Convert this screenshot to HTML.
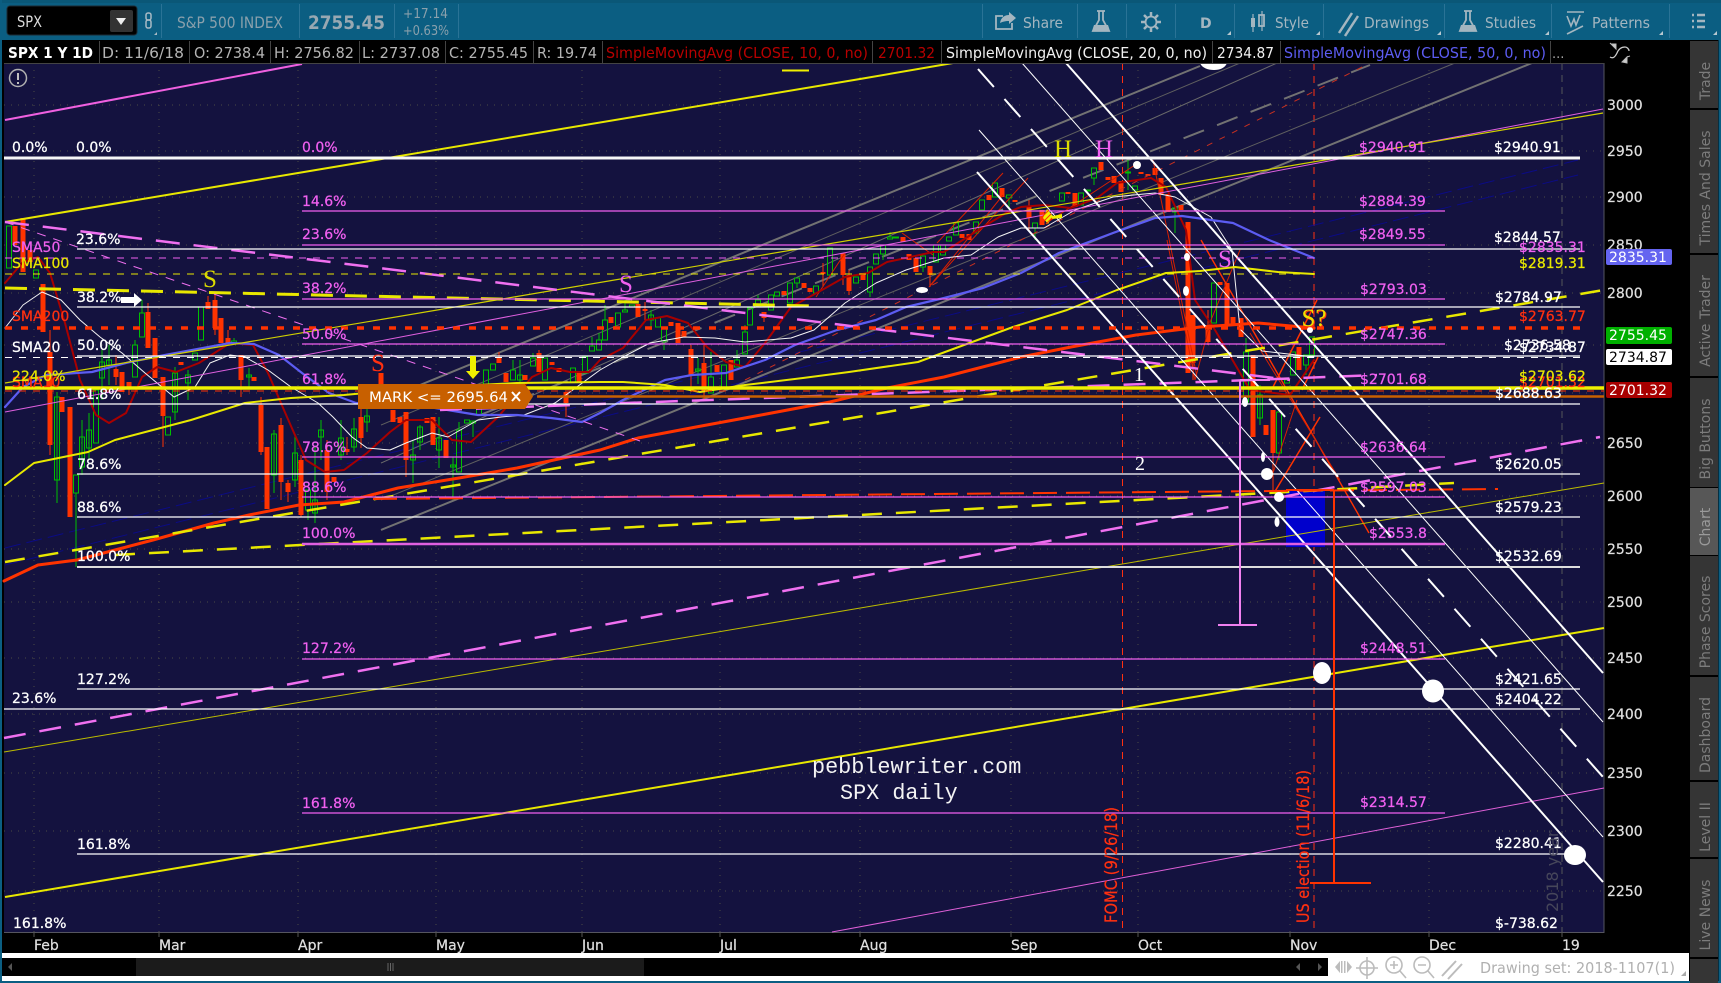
<!DOCTYPE html>
<html><head><meta charset="utf-8"><title>SPX</title>
<style>
html,body{margin:0;padding:0;background:#000;width:1721px;height:983px;overflow:hidden}
svg{display:block}
text{font-family:"DejaVu Sans","Liberation Sans",sans-serif;font-size:14px}
.w{fill:#fff;stroke:#fff;stroke-width:.25}.m{fill:#f060f0;stroke:#f060f0;stroke-width:.25}.y{fill:#e8e800;stroke:#e8e800;stroke-width:.25}.r{fill:#ff3010;stroke:#ff3010;stroke-width:.25}
.tb{fill:#a4b6c0;font-size:15px}
.ax{fill:#e0e0e0;stroke:#e0e0e0;stroke-width:.2}
.tab{fill:#7c7c7c;font-size:14px;text-anchor:middle}
.ser{font-family:"Liberation Serif",serif;font-size:25px;text-anchor:middle}
.mono{font-family:"Liberation Mono",monospace;fill:#f4f4f4;font-size:21.8px}
.ib{fill:#b4b4b4;font-size:15px}
</style></head><body>
<svg width="1721" height="983" viewBox="0 0 1721 983" xmlns="http://www.w3.org/2000/svg">
<!-- frame -->
<rect width="1721" height="983" fill="#000"/>
<rect width="1721" height="40" fill="#0b5e82"/>
<rect width="1721" height="3" fill="#0a5777"/>
<rect x="0" y="0" width="2" height="983" fill="#0b5e82"/>
<rect x="1718.500" y="40" width="2.500" height="943" fill="#0b5e82"/>
<rect x="0" y="981" width="1721" height="2" fill="#0b5e82"/>
<!-- plot -->
<rect x="4" y="63" width="1600" height="869" fill="#14123f"/>
<path d="M1604 63V932.500H4" fill="none" stroke="#55555f"/>
<path d="M4 105H1604M4 151H1604M4 197H1604M4 245H1604M4 293H1604M4 345H1604M4 393H1604M4 443H1604M4 496H1604M4 549H1604M4 602H1604M4 658H1604M4 714H1604M4 773H1604M4 831H1604M4 891H1604M34 63V932M159 63V932M298 63V932M436 63V932M582 63V932M720 63V932M860 63V932M1011 63V932M1138 63V932M1290 63V932M1429 63V932" stroke="#4a4a44" stroke-dasharray="1 6" fill="none"/>
<path d="M1562 63V932" stroke="#55555a" stroke-dasharray="7 5" fill="none"/>
<path d="M1122.500 63V932M1314 63V932" stroke="#ff3010" stroke-dasharray="7 6" fill="none"/>

<!-- dark blue dashed -->
<g fill="none" stroke="#0b0b85" stroke-dasharray="16 6"><path d="M5 548L1578 160"/><path d="M5 565L1578 175"/></g>
<!-- grey diagonals -->
<g fill="none" stroke="#727272">
<path d="M420 385L1200 66" stroke-width="2"/>
<path d="M381 425L1240 63" stroke="#5f5f5f"/>
<path d="M381 463L1277 63" stroke="#6a6a6a"/>
<path d="M381 500L1455 63" stroke="#5f5f5f"/>
<path d="M381 530L1532 63" stroke-width="2"/>
<path d="M480 415L1370 65" stroke-width="2" stroke-dasharray="22 14"/>
</g>

<!-- candles: green -->
<path fill="none" stroke="#00c000" d="M6.500 226h5v42h-5zM33.500 270h5v8h-5zM54.500 397h5v83h-5zM73.500 475h5v18h-5zM79.500 437h5v30h-5zM86.500 430h5v18h-5zM93.500 390h5v53h-5zM99.500 362h5v16h-5zM106.500 360h5v5h-5zM132.500 345h5v32h-5zM139.500 313h5v24h-5zM165.500 417h5v18h-5zM172.500 373h5v39h-5zM185.500 375h5v8h-5zM192.500 353h5v7h-5zM198.500 307h5v33h-5zM231.500 341h5v2h-5zM246.500 375h5v2h-5zM271.500 434h5v41h-5zM292.500 453h5v27h-5zM305.500 490h5v20h-5zM312.500 500h5v13h-5zM318.500 430h5v7h-5zM338.500 438h5v17h-5zM351.500 429h5v18h-5zM364.500 416h5v6h-5zM410.500 455h5v5h-5zM417.500 427h5v15h-5zM436.500 438h5v12h-5zM450.500 465h5v2h-5zM456.500 430h5v42h-5zM464.500 420h5v3h-5zM470.500 421h5v2h-5zM476.500 407h5v8h-5zM483.500 370h5v23h-5zM490.500 364h5v6h-5zM510.500 370h5v10h-5zM517.500 375h5v5h-5zM530.500 358h5v8h-5zM542.500 358h5v22h-5zM570.500 368h5v14h-5zM582.500 357h5v16h-5zM589.500 346h5v5h-5zM596.500 340h5v10h-5zM602.500 320h5v20h-5zM615.500 313h5v14h-5zM622.500 310h5v2h-5zM629.500 305h5v2h-5zM648.500 315h5v5h-5zM655.500 318h5v9h-5zM661.500 329h5v12h-5zM695.500 369h5v2h-5zM708.500 377h5v16h-5zM721.500 365h5v23h-5zM734.500 360h5v7h-5zM742.500 332h5v22h-5zM747.500 308h5v17h-5zM755.500 300h5v7h-5zM768.500 295h5v15h-5zM774.500 292h5v4h-5zM787.500 283h5v20h-5zM794.500 278h5v5h-5zM813.500 286h5v7h-5zM827.500 248h5v27h-5zM853.500 277h5v6h-5zM867.500 267h5v25h-5zM873.500 254h5v10h-5zM880.500 245h5v9h-5zM887.500 237h5v2h-5zM893.500 237h5v1h-5zM920.500 256h5v11h-5zM933.500 245h5v17h-5zM940.500 245h5v10h-5zM946.500 237h5v4h-5zM953.500 223h5v12h-5zM973.500 222h5v11h-5zM979.500 200h5v10h-5zM992.500 183h5v14h-5zM1006.500 195h5v3h-5zM1032.500 223h5v5h-5zM1059.500 193h5v8h-5zM1078.500 193h5v12h-5zM1085.500 190h5v1h-5zM1091.500 168h5v10h-5zM1125.500 172h5v1h-5zM1132.500 186h5v4h-5zM1172.500 208h5v4h-5zM1211.500 283h5v40h-5zM1243.500 352h5v50h-5zM1257.500 395h5v23h-5zM1276.500 412h5v41h-5zM1284.500 380h5v3h-5zM1290.500 352h5v23h-5zM1303.500 355h5v10h-5zM1309.500 337h5v18h-5z"/>
<path fill="none" stroke="#00c000" d="M57 392V503M76 493V567M82 420V475M89 413V460M102 350V400M109 345V385M135 340V345M142 300V313M175 367V420M188 370V400M234 338V341M249 368V387M274 430V493M295 435V487M308 510V520M315 447V523M321 420V460M341 420V460M354 418V452M367 407V432M413 440V483M420 425V450M439 417V468M453 457V500M459 422V430M473 423V437M513 360V370M520 360V385M533 353V358M592 337V346M599 333V340M605 305V320M625 300V310M651 310V330M664 341V350M698 358V384M711 352V377M737 350V360M745 325V332M758 295V300M797 283V288M870 292V297M883 254V260M890 232V237M923 267V272M1009 198V210M1035 228V240M1094 178V185M1128 160V190M1175 208V233M1246 338V352M1260 385V425M1279 453V460M1306 365V375"/>
<!-- candles: red bodies -->
<path fill="none" stroke="#ff3300" stroke-width="5" d="M15 226V245M23 218V272M30 250V262M43 284V332M50 352V445M62 397V412M70 407V517M116 369V377M122 372V392M129 382V388M148 312V348M155 338V378M163 377V416M181 362V365M208 302V309M215 300V328M221 318V343M228 338V343M241 355V380M254 377V381M261 405V452M267 447V509M281 425V482M288 483V492M301 460V515M327 450V492M334 477V482M347 449V452M361 417V438M381 373V385M393 410V422M400 417V423M406 412V460M427 418V423M433 417V445M446 440V458M499 357V363M506 373V382M525 375V380M539 353V372M552 362V365M559 368V372M566 392V403M579 373V382M611 317V323M638 304V317M645 309V311M671 322V326M678 323V343M684 331V337M691 349V375M704 363V392M717 365V372M731 360V380M764 312V318M784 291V295M804 283V288M810 288V292M823 272V274M843 253V275M849 275V291M863 273V280M903 237V242M909 254V260M916 258V272M930 266V275M962 234V238M969 234V240M989 195V200M1002 188V197M1015 200V202M1029 207V218M1042 210V225M1068 192V194M1075 193V207M1101 162V170M1108 177V180M1114 176V183M1121 181V192M1141 172V174M1148 174V176M1155 168V175M1161 178V195M1168 194V212M1181 205V210M1188 222V373M1193 315V363M1208 330V342M1220 282V285M1227 283V325M1233 317V325M1241 318V337M1253 355V437M1266 425V435M1273 410V453M1299 347V370"/>
<path fill="none" stroke="#ff3300" d="M50 330V455M116 355V385M129 388V395M148 303V312M163 416V447M208 296V302M215 293V335M228 330V338M241 380V397M261 397V455M281 418V500M288 480V502M301 455V517M327 440V500M347 437V455M361 407V448M381 373V390M406 460V477M499 352V357M539 350V353M566 403V417M645 302V320M691 345V392M704 345V400M764 318V322M823 263V287M843 275V285M849 270V295M930 275V287M1029 200V230M1193 363V380M1208 310V345M1273 453V490"/>

<!-- thin red zigzags and dashed -->
<g fill="none" stroke="#d62000">
<path d="M745 380L1370 63" stroke="#c83020" stroke-dasharray="6 8"/>
<path d="M816 297L845 253M902 233L933 255M929 287L1028 178M937 243L1003 173M929 287L1003 195M1048 222L1135 165M1153 160L1197 377M1167 240L1195 380M1195 380L1211 320L1240 250" />
<path d="M1201 240L1369 533" stroke="#ff3300" stroke-width="1.400"/>
<path d="M1250 333L1340 480M1273 473L1297 400"/>
<path d="M1274 493L1320 417M1273 387L1317 300M1302 390L1318 357" stroke="#ff3300" stroke-width="1.500"/>
</g>

<!-- SMA curves -->
<g fill="none" stroke-linejoin="round" stroke-linecap="round">
<polyline stroke="#a80000" stroke-width="2" points="5,283 23,262 38,257 50,273 65,323 80,380 96,415 109,423 126,413 142,377 157,367 176,372 199,363 230,343 253,345 268,373 287,417 306,460 325,472 344,470 367,453 390,432 406,420 432,420 452,440 471,442 498,417 532,377 551,368 570,372 589,372 600,360 623,348 646,320 667,316 688,323 707,347 726,362 745,367 765,343 791,307 822,290 845,277 868,273 887,262 906,258 933,252 944,252 983,227 1006,213 1021,207 1044,205 1071,208 1097,198 1117,183 1151,178 1166,187 1186,230 1195,300 1215,330 1250,390 1290,395 1314,360"/>
<polyline stroke="#f4f4f4" stroke-width="1" points="5,328 23,305 42,292 61,300 80,320 100,337 122,353 145,373 174,397 195,387 210,363 230,355 245,357 268,370 291,387 318,403 333,417 352,437 367,448 390,450 406,443 432,433 448,437 478,420 501,417 524,415 555,403 600,370 623,357 650,343 684,337 715,338 745,342 791,338 814,330 845,303 876,283 906,270 944,258 971,255 998,237 1021,228 1044,228 1075,210 1113,197 1155,193 1175,197 1211,217 1232,250 1240,329 1262,351 1314,357"/>
<polyline stroke="#5c5cf2" stroke-width="2.200" points="5,407 23,387 46,375 92,372 130,362 165,355 203,348 230,343 254,344 279,355 302,373 329,393 356,403 429,407 478,415 517,415 551,418 582,422 600,413 623,400 665,380 692,375 726,373 765,360 795,345 837,330 876,320 906,307 944,298 983,288 1021,273 1059,253 1113,233 1155,218 1182,216 1233,223 1269,240 1314,258"/>
<polyline stroke="#e8e800" stroke-width="2" points="5,485 34,463 88,452 115,440 153,430 191,420 245,403 291,398 344,395 421,388 517,383 600,382 623,382 665,385 700,392 745,385 803,378 849,372 918,362 964,345 1013,327 1067,310 1117,290 1166,273 1200,271 1235,267 1278,272 1314,274"/>
<polyline stroke="#ff3300" stroke-width="3" points="4,581 38,565 77,560 115,550 153,540 214,523 249,515 299,505 344,502 398,488 459,478 517,468 600,450 638,438 696,427 761,415 830,402 887,388 944,377 1021,357 1071,347 1136,335 1200,327 1230,325 1258,323 1314,328"/>
</g>

<!-- blue box -->
<rect x="1286" y="490" width="39" height="57" fill="#0000cc"/>

<!-- channel and trend lines -->
<g fill="none">
<path d="M5 120L302 64" stroke="#f060e0" stroke-width="2"/>
<path d="M5 222L860 79L953 63" stroke="#e8e800" stroke-width="2"/>
<path d="M5 897L1604 628" stroke="#e8e800" stroke-width="2"/>
<path d="M4 752L1604 483" stroke="#bcbc00"/>
<path d="M832 932L1604 788" stroke="#e060d8"/>
<path d="M5 412L1603 109" stroke="#e060e0"/>
<path d="M5 383L1603 113" stroke="#d0d000" stroke-width="1.200"/>
<path d="M4 738L1600 437" stroke="#f070f0" stroke-width="2.500" stroke-dasharray="22 14"/>
<path d="M5 562L1604 290" stroke="#e8e800" stroke-width="2.500" stroke-dasharray="20 14"/>
<path d="M115 555L1454 483" stroke="#e8e800" stroke-width="2.500" stroke-dasharray="20 14"/>
<path d="M5 288L812 306" stroke="#e8e800" stroke-width="3" stroke-dasharray="22 12"/>
<path d="M5 222L1290 380" stroke="#f070f0" stroke-width="2.500" stroke-dasharray="24 14"/>
<path d="M5 222L640 441" stroke="#f070f0" stroke-dasharray="9 8"/>
<path d="M440 410L600 404L1200 382L1377 375" stroke="#f070f0" stroke-width="2.500" stroke-dasharray="22 14"/>
<path d="M373 499L1498 489" stroke="#ff3300" stroke-width="2" stroke-dasharray="24 9"/>
</g>
<!-- descending white channel -->
<g fill="none" stroke="#fff">
<path d="M977 172L1603 882" stroke-width="2"/>
<path d="M979 130L1603 837"/>
<path d="M978 69L1603 777" stroke-width="2" stroke-dasharray="24 16"/>
<path d="M1022 63L1603 722"/>
<path d="M1066 63L1603 673" stroke-width="2"/>
</g>

<!-- horizontal fibs -->
<g fill="none">
<path d="M302 211H1445M302 245H1445M302 299H1445M302 344H1445M302 457H1445M302 497H1445M302 659H1445M302 813H1445" stroke="#f060f0" stroke-width="1.200"/>
<path d="M302 544H1445" stroke="#e060e0" stroke-width="2.500"/>
<path d="M77 249H1580M77 307H1580M77 356H1580M77 404H1580M77 474H1580M77 517H1580M77 689H1580M4 709H1580M77 854H1575" stroke="#fff" stroke-width="1.200"/>
<path d="M4 158H1580" stroke="#f6f6f6" stroke-width="3"/>
<path d="M77 567H1580" stroke="#ddd" stroke-width="2"/>
<path d="M5 258H1314" stroke="#f060f0" stroke-dasharray="7 7"/>
<path d="M5 274H1314" stroke="#e8e800" stroke-dasharray="7 7"/>
<path d="M5 328H1585" stroke="#ff3300" stroke-width="3.500" stroke-dasharray="7 9"/>
<path d="M5 357.500H1585" stroke="#fff" stroke-dasharray="7 7"/>
<path d="M5 391H1604" stroke="#ff3300" stroke-dasharray="7 7"/>
<path d="M5 388H1604" stroke="#f0f000" stroke-width="3.500"/>
<path d="M537 396.500H1604" stroke="#c86000" stroke-width="2.500"/>
<path d="M782 70.500H809" stroke="#f0f000" stroke-width="2"/>
</g>

<!-- verticals -->
<path d="M1240 380V625M1218 625H1257M1240 380H1270" stroke="#f080f0" stroke-width="2" fill="none"/>
<path d="M1334 490V883M1310 883H1371M1286 490H1334" stroke="#ff3300" stroke-width="2" fill="none"/>

<!-- white dots -->
<g fill="#fff">
<path d="M1200 63h27c-2 5-7 7-13 7s-12-2-14-7z"/>
<ellipse cx="1322" cy="673" rx="9" ry="11"/>
<ellipse cx="1433" cy="691" rx="11" ry="11.500"/>
<ellipse cx="1575" cy="855" rx="11" ry="10"/>
<circle cx="1267" cy="474" r="6"/>
<ellipse cx="1279" cy="497" rx="5" ry="5"/>
<ellipse cx="1277" cy="522" rx="2.500" ry="5"/>
<ellipse cx="1263" cy="457" rx="2" ry="5"/>
<ellipse cx="1245" cy="402" rx="3" ry="5"/>
<ellipse cx="922" cy="290" rx="6" ry="3"/>
<circle cx="1137" cy="165" r="4"/>
<ellipse cx="1187" cy="257" rx="3" ry="4"/>
<ellipse cx="1186" cy="291" rx="3" ry="5"/>
<ellipse cx="1310" cy="330" rx="3" ry="3"/>
</g>
<path d="M1047 209l6 7l9-2v4l-11 1l-3 5l-5-6z" fill="#f0f000"/>
<path d="M1041 218l8-8M1043 222l8-8M1046 224l6-6" stroke="#ff3300" fill="none"/>
<path d="M121 297h13v-4l8 7l-8 7v-4h-13z" fill="#fff"/>
<path d="M470 356h6v15h4l-7 8l-7-8h4z" fill="#f0f000"/>

<!-- left labels -->
<g>
<text x="12" y="152" class="w">0.0%</text><text x="76" y="152" class="w">0.0%</text><text x="302" y="152" class="m">0.0%</text>
<text x="302" y="206" class="m">14.6%</text>
<text x="302" y="239" class="m">23.6%</text><text x="76" y="244" class="w">23.6%</text>
<text x="12" y="252" class="m">SMA50</text><text x="12" y="268" class="y">SMA100</text>
<text x="77" y="302" class="w">38.2%</text><text x="302" y="293" class="m">38.2%</text>
<text x="12" y="321" class="r">SMA200</text>
<text x="302" y="339" class="m">50.0%</text><text x="77" y="350" class="w">50.0%</text><text x="12" y="352" class="w">SMA20</text>
<text x="12" y="387" class="r">SMA10</text><text x="12" y="381" class="y">224.0%</text>
<text x="302" y="384" class="m">61.8%</text><text x="77" y="399" class="w">61.8%</text>
<text x="302" y="452" class="m">78.6%</text><text x="77" y="469" class="w">78.6%</text>
<text x="302" y="492" class="m">88.6%</text><text x="77" y="512" class="w">88.6%</text>
<text x="302" y="538" class="m">100.0%</text><text x="77" y="561" class="w">100.0%</text>
<text x="302" y="653" class="m">127.2%</text><text x="77" y="684" class="w">127.2%</text>
<text x="12" y="703" class="w">23.6%</text>
<text x="302" y="808" class="m">161.8%</text><text x="77" y="849" class="w">161.8%</text>
<text x="13" y="928" class="w">161.8%</text>
</g>
<!-- right labels -->
<g>
<text x="1359" y="152" class="m">$2940.91</text><text x="1359" y="206" class="m">$2884.39</text><text x="1359" y="239" class="m">$2849.55</text><text x="1360" y="294" class="m">$2793.03</text><text x="1360" y="339" class="m">$2747.36</text><text x="1360" y="384" class="m">$2701.68</text><text x="1360" y="452" class="m">$2636.64</text><text x="1360" y="492" class="m">$2597.03</text><text x="1369" y="538" class="m">$2553.8</text><text x="1360" y="653" class="m">$2448.51</text><text x="1360" y="807" class="m">$2314.57</text>
<text x="1494" y="152" class="w">$2940.91</text><text x="1494" y="242" class="w">$2844.57</text><text x="1495" y="302" class="w">$2784.97</text><text x="1504" y="350" class="w">$2736.58</text><text x="1495" y="398" class="w">$2688.63</text><text x="1495" y="469" class="w">$2620.05</text><text x="1495" y="512" class="w">$2579.23</text><text x="1495" y="561" class="w">$2532.69</text><text x="1495" y="684" class="w">$2421.65</text><text x="1495" y="704" class="w">$2404.22</text><text x="1495" y="848" class="w">$2280.41</text><text x="1495" y="928" class="w">$-738.62</text>
<text x="1519" y="252" class="m">$2835.31</text><text x="1519" y="268" class="y">$2819.31</text><text x="1519" y="321" class="r">$2763.77</text><text x="1519" y="352" class="w">$2734.87</text><text x="1519" y="387" class="r">$2701.32</text><text x="1519" y="381" class="y">$2703.62</text>
</g>
<!-- pattern letters -->
<text x="1063" y="157" class="ser" fill="#dcdc00">H</text>
<text x="1104" y="157" class="ser" fill="#f060f0">H</text>
<text x="210" y="287" class="ser" fill="#dcdc00">S</text>
<text x="626" y="292" class="ser" fill="#f060f0">S</text>
<text x="378" y="371" class="ser" fill="#ff3010">S</text>
<text x="1225" y="267" class="ser" fill="#f060f0">S</text>
<text x="1315" y="327" class="ser" fill="#ff3010">S?</text>
<text x="1314" y="326" class="ser" fill="#f0e000">S?</text>
<text x="1139" y="381" class="ser" fill="#fff" style="font-size:20px">1</text>
<text x="1140" y="470" class="ser" fill="#fff" style="font-size:20px">2</text>
<text x="812" y="773" class="mono">pebblewriter.com</text>
<text x="840" y="799" class="mono">SPX daily</text>
<text transform="translate(1117 923) rotate(-90)" class="r" style="font-size:17px" textLength="116" lengthAdjust="spacingAndGlyphs">FOMC (9/26/18)</text>
<text transform="translate(1309 923) rotate(-90)" class="r" style="font-size:17px" textLength="153" lengthAdjust="spacingAndGlyphs">US election (11/6/18)</text>
<text transform="translate(1558 912) rotate(-90)" fill="#46465a" style="font-size:16px">2018 year</text>

<!-- mark tag -->
<path d="M358 384H525L533 396.500L525 409H358z" fill="#c86000"/>
<text x="369" y="402" fill="#fff" style="font-size:14.500px" textLength="139" lengthAdjust="spacingAndGlyphs">MARK &lt;= 2695.64</text>
<path d="M512 392l8 9M520 392l-8 9" stroke="#fff" stroke-width="2" fill="none"/>

<!-- ! icon -->
<circle cx="18" cy="78" r="8.500" fill="none" stroke="#b0b0b0" stroke-width="1.500"/>
<path d="M18 73V80M18 82V84" stroke="#c0c0c0" stroke-width="2" fill="none"/>

<!-- info bar -->
<rect x="4" y="40" width="1600" height="23" fill="#000"/>
<path d="M4 63.500H1604" stroke="#444"/>
<path d="M99.500 41V63M189.500 41V63M270.500 41V63M359.500 41V63M445.500 41V63M533.500 41V63M602.500 41V63M872.500 41V63M941.500 41V63M1212.500 41V63M1280.500 41V63M1550.500 41V63" stroke="#444"/>
<text x="8" y="58" fill="#fff" style="font-size:15px;font-weight:bold" textLength="85" lengthAdjust="spacingAndGlyphs">SPX 1 Y 1D</text>
<text x="102" y="58" class="ib" textLength="82" lengthAdjust="spacingAndGlyphs">D: 11/6/18</text>
<text x="194" y="58" class="ib" textLength="71" lengthAdjust="spacingAndGlyphs">O: 2738.4</text>
<text x="274" y="58" class="ib" textLength="80" lengthAdjust="spacingAndGlyphs">H: 2756.82</text>
<text x="362" y="58" class="ib" textLength="78" lengthAdjust="spacingAndGlyphs">L: 2737.08</text>
<text x="449" y="58" class="ib" textLength="79" lengthAdjust="spacingAndGlyphs">C: 2755.45</text>
<text x="537" y="58" class="ib" textLength="60" lengthAdjust="spacingAndGlyphs">R: 19.74</text>
<text x="606" y="58" fill="#b80000" style="font-size:15px" textLength="262" lengthAdjust="spacingAndGlyphs">SimpleMovingAvg (CLOSE, 10, 0, no)</text>
<text x="878" y="58" fill="#b80000" style="font-size:15px" textLength="57" lengthAdjust="spacingAndGlyphs">2701.32</text>
<text x="946" y="58" fill="#f0f0f0" style="font-size:15px" textLength="261" lengthAdjust="spacingAndGlyphs">SimpleMovingAvg (CLOSE, 20, 0, no)</text>
<text x="1217" y="58" fill="#f0f0f0" style="font-size:15px" textLength="57" lengthAdjust="spacingAndGlyphs">2734.87</text>
<text x="1284" y="58" fill="#5c5cf2" style="font-size:15px" textLength="262" lengthAdjust="spacingAndGlyphs">SimpleMovingAvg (CLOSE, 50, 0, no)</text>
<text x="1552" y="58" fill="#aaa" style="font-size:13px">...</text>

<!-- top bar left -->
<rect x="7" y="6" width="130" height="29" rx="3" fill="#000" stroke="#1c2a33"/>
<text x="17" y="27" fill="#dcdcdc" style="font-size:16px" textLength="25" lengthAdjust="spacingAndGlyphs">SPX</text>
<rect x="110" y="10" width="23" height="22" rx="2" fill="#333"/>
<path d="M116 18h10l-5 7z" fill="#eee"/>
<g fill="none" stroke="#a8bac4" stroke-width="1.500"><rect x="146" y="13" width="5" height="7" rx="2"/><rect x="146" y="20" width="5" height="8" rx="2"/></g>
<path d="M157 32v3h-3z" fill="#a8bac4"/>
<path d="M161.500 4V38M299.500 4V38M394.500 4V38M458.500 4V38M982.500 4V38M1077.500 4V38M1126.500 4V38M1175.500 4V38M1234.500 4V38M1323.500 4V38M1444.500 4V38M1551.500 4V38M1669.500 4V38" stroke="#2a7396"/>
<text x="177" y="28" fill="#8aa0ac" style="font-size:16px" textLength="106" lengthAdjust="spacingAndGlyphs">S&amp;P 500 INDEX</text>
<text x="308" y="29" fill="#98a8b2" style="font-size:19px;font-weight:bold" textLength="77" lengthAdjust="spacingAndGlyphs">2755.45</text>
<text x="403" y="18" fill="#8aa0ac" style="font-size:13px" textLength="45" lengthAdjust="spacingAndGlyphs">+17.14</text>
<text x="403" y="35" fill="#8aa0ac" style="font-size:13px" textLength="46" lengthAdjust="spacingAndGlyphs">+0.63%</text>
<!-- top bar right -->
<g fill="none" stroke="#a4b6c0" stroke-width="1.800">
<path d="M1012 23v6h-16v-13h7"/><path d="M1000 23c1-6 5-8 9-8v-3l7 6l-7 6v-3c-4 0-7 1-9 2z" fill="#a4b6c0" stroke="none"/>
<path d="M1097 11h8M1099 11v9l-6 11h16l-6-11v-9"/>
<path d="M1094 25h14l2 6h-18z" fill="#a4b6c0" stroke="none"/>
<circle cx="1151" cy="22" r="5.500"/>
<path d="M1151 12v4M1151 28v4M1141 22h4M1157 22h4M1144 15l3 3M1155 26l3 3M1158 15l-3 3M1147 26l-3 3" stroke-width="2.500"/>
<path d="M1253 14v18M1262 11v20" stroke-width="1.200"/>
<rect x="1251" y="18" width="4" height="9" fill="#a4b6c0" stroke="none"/><rect x="1259" y="15" width="5" height="11"/>
<path d="M1339 33L1352 13M1345 36L1358 16" stroke-width="2.500"/>
<path d="M1464 11h8M1466 11v9l-6 11h16l-6-11v-9"/>
<path d="M1461 25h14l2 6h-18z" fill="#a4b6c0" stroke="none"/>
<path d="M1567 12h17M1567 16l4 10l3-7l2 6l4-10M1567 34l16-8" stroke-width="1.600"/>
<path d="M1692 15h2M1697 15h8M1692 21h2M1697 21h8M1692 27h2M1697 27h8" stroke-width="2.500"/>
</g>
<text x="1023" y="28" class="tb" textLength="40" lengthAdjust="spacingAndGlyphs">Share</text>
<text x="1200" y="28" fill="#a4b6c0" style="font-size:14px;font-weight:bold">D</text>
<text x="1275" y="28" class="tb" textLength="34" lengthAdjust="spacingAndGlyphs">Style</text>
<text x="1364" y="28" class="tb" textLength="65" lengthAdjust="spacingAndGlyphs">Drawings</text>
<text x="1485" y="28" class="tb" textLength="51" lengthAdjust="spacingAndGlyphs">Studies</text>
<text x="1592" y="28" class="tb" textLength="58" lengthAdjust="spacingAndGlyphs">Patterns</text>
<path d="M1231 31v4h-4zM1320 31v4h-4zM1441 31v4h-4zM1549 31v4h-4zM1663 31v4h-4zM1717 31v4h-4z" fill="#b8c8d0"/>

<!-- axis -->
<g>
<text x="1607" y="110" class="ax">3000</text><text x="1607" y="156" class="ax">2950</text><text x="1607" y="202" class="ax">2900</text><text x="1607" y="250" class="ax">2850</text><text x="1607" y="298" class="ax">2800</text><text x="1607" y="448" class="ax">2650</text><text x="1607" y="501" class="ax">2600</text><text x="1607" y="554" class="ax">2550</text><text x="1607" y="607" class="ax">2500</text><text x="1607" y="663" class="ax">2450</text><text x="1607" y="719" class="ax">2400</text><text x="1607" y="778" class="ax">2350</text><text x="1607" y="836" class="ax">2300</text><text x="1607" y="896" class="ax">2250</text>
</g>
<rect x="1606" y="249" width="66" height="16" rx="2" fill="#6464f0"/><text x="1609" y="262" fill="#fff">2835.31</text>
<rect x="1606" y="327" width="66" height="17" rx="2" fill="#00b000"/><text x="1609" y="340" fill="#fff">2755.45</text>
<rect x="1606" y="349" width="66" height="16" rx="2" fill="#fff"/><text x="1609" y="362" fill="#000">2734.87</text>
<rect x="1606" y="382" width="66" height="16" rx="2" fill="#a80000"/><text x="1609" y="395" fill="#fff">2701.32</text>
<path d="M1611 44l5 5v-5zM1616 44l-5 0M1616 49l-6-6" stroke="#bbb" fill="#ccc"/>
<path d="M1610 57c3 2 5 0 7-4c2-5 5-6 8-6c2 0 4 2 4 4" fill="none" stroke="#ccc" stroke-width="1.300"/>
<path d="M1622 62l5-5v6zM1627 57l3 -1" stroke="#bbb" fill="#ccc"/>
<!-- months -->
<path d="M34 932v5M159 932v5M298 932v5M436 932v5M582 932v5M720 932v5M860 932v5M1011 932v5M1138 932v5M1290 932v5M1429 932v5M1562 932v5" stroke="#555" />
<text x="34" y="950" class="ax">Feb</text><text x="159" y="950" class="ax">Mar</text><text x="298" y="950" class="ax">Apr</text><text x="436" y="950" class="ax">May</text><text x="582" y="950" class="ax">Jun</text><text x="720" y="950" class="ax">Jul</text><text x="860" y="950" class="ax">Aug</text><text x="1011" y="950" class="ax">Sep</text><text x="1138" y="950" class="ax">Oct</text><text x="1290" y="950" class="ax">Nov</text><text x="1429" y="950" class="ax">Dec</text><text x="1562" y="950" class="ax">19</text>

<!-- bottom strip -->
<rect x="2" y="953" width="1687" height="28" fill="#fff"/>
<rect x="2" y="958" width="1326" height="18" fill="#000"/>
<rect x="136" y="958" width="508" height="18" fill="#1b1b1b"/>
<path d="M388 963v8M390.500 963v8M393 963v8" stroke="#666"/>
<path d="M12 963v8l-4-4zM1300 963v8l-4-4zM1318 963v8l4-4z" fill="#555"/>
<g fill="#bcbcbc"><path d="M1335 967l5-6v12zM1352 967l-5-6v12z"/><rect x="1341" y="961" width="1.500" height="12"/><rect x="1344" y="961" width="1.500" height="12"/></g>
<g fill="none" stroke="#bcbcbc" stroke-width="1.600">
<circle cx="1367" cy="968" r="7"/><path d="M1367 957V979M1356 968H1378"/>
<circle cx="1394" cy="965" r="8"/><path d="M1400 971L1406 978M1390 965H1398M1394 961V969"/>
<circle cx="1422" cy="965" r="8"/><path d="M1428 971L1434 978M1418 965H1426"/>
<path d="M1442 976L1456 961M1448 979L1462 964" stroke-width="2"/>
</g>
<text x="1480" y="973" fill="#b0b0b0" style="font-size:15px" textLength="195" lengthAdjust="spacingAndGlyphs">Drawing set: 2018-1107(1)</text>
<path d="M1686 971v5h-5z" fill="#aaa"/>

<!-- right tabs -->
<g fill="#353535">
<rect x="1690" y="41" width="28" height="67"/><rect x="1690" y="110" width="28" height="143"/><rect x="1690" y="255" width="28" height="121"/><rect x="1690" y="378" width="28" height="109"/><rect x="1690" y="556" width="28" height="119"/><rect x="1690" y="677" width="28" height="103"/><rect x="1690" y="782" width="28" height="75"/><rect x="1690" y="859" width="28" height="98"/><rect x="1690" y="959" width="28" height="24"/>
</g>
<rect x="1690" y="488" width="28" height="67" fill="#575757"/>
<text transform="translate(1710 81) rotate(-90)" class="tab">Trade</text>
<text transform="translate(1710 188) rotate(-90)" class="tab">Times And Sales</text>
<text transform="translate(1710 321) rotate(-90)" class="tab">Active Trader</text>
<text transform="translate(1710 439) rotate(-90)" class="tab">Big Buttons</text>
<text transform="translate(1710 527) rotate(-90)" class="tab" style="fill:#9a9a9a">Chart</text>
<text transform="translate(1710 622) rotate(-90)" class="tab">Phase Scores</text>
<text transform="translate(1710 735) rotate(-90)" class="tab">Dashboard</text>
<text transform="translate(1710 827) rotate(-90)" class="tab">Level II</text>
<text transform="translate(1710 915) rotate(-90)" class="tab">Live News</text>
</svg>
</body></html>
